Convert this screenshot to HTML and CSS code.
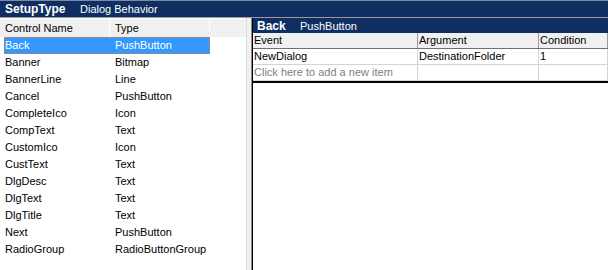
FILE: index.html
```html
<!DOCTYPE html>
<html lang="en">
<head>
  <meta charset="UTF-8">
  <link rel="stylesheet" href="styles.css">
  <title>Dialog Behavior</title>
</head>
<body>
  <div class="titlebar">
    <span class="titulo">SetupType</span>
    <span class="subtitulo">Dialog Behavior</span>
  </div>

  <div class="area">
    <div class="controles">
      <div class="cabecalho">
        <div class="col-nome">Control Name</div>
        <div class="col-tipo">Type</div>
      </div>
      <div class="linha selecionada"><div class="col-nome">Back</div><div class="col-tipo">PushButton</div></div>
      <div class="linha"><div class="col-nome">Banner</div><div class="col-tipo">Bitmap</div></div>
      <div class="linha"><div class="col-nome">BannerLine</div><div class="col-tipo">Line</div></div>
      <div class="linha"><div class="col-nome">Cancel</div><div class="col-tipo">PushButton</div></div>
      <div class="linha"><div class="col-nome">CompleteIco</div><div class="col-tipo">Icon</div></div>
      <div class="linha"><div class="col-nome">CompText</div><div class="col-tipo">Text</div></div>
      <div class="linha"><div class="col-nome">CustomIco</div><div class="col-tipo">Icon</div></div>
      <div class="linha"><div class="col-nome">CustText</div><div class="col-tipo">Text</div></div>
      <div class="linha"><div class="col-nome">DlgDesc</div><div class="col-tipo">Text</div></div>
      <div class="linha"><div class="col-nome">DlgText</div><div class="col-tipo">Text</div></div>
      <div class="linha"><div class="col-nome">DlgTitle</div><div class="col-tipo">Text</div></div>
      <div class="linha"><div class="col-nome">Next</div><div class="col-tipo">PushButton</div></div>
      <div class="linha"><div class="col-nome">RadioGroup</div><div class="col-tipo">RadioButtonGroup</div></div>
    </div>

    <div class="divisor"></div>

    <div class="eventos">
      <div class="eventos-titulo">
        <span class="titulo">Back</span>
        <span class="subtitulo">PushButton</span>
      </div>
      <div class="grade">
        <div class="grade-linha grade-cabecalho">
          <div class="c-evento">Event</div>
          <div class="c-arg">Argument</div>
          <div class="c-cond">Condition</div>
        </div>
        <div class="grade-linha">
          <div class="c-evento">NewDialog</div>
          <div class="c-arg">DestinationFolder</div>
          <div class="c-cond">1</div>
        </div>
        <div class="grade-linha nova">
          <div class="c-evento">Click here to add a new item</div>
          <div class="c-arg"></div>
          <div class="c-cond"></div>
        </div>
      </div>
    </div>
  </div>
</body>
</html>
```

FILE: styles.css
```css
body {
  font-family: 'Liberation Sans', Arial, sans-serif;
  font-size: 11px;
  margin: 0;
  padding: 0;
  width: 608px;
  height: 270px;
  overflow: hidden;
  background-color: #fff;
  color: #000;
}

.titlebar {
  height: 16px;
  background-color: #0f2f63;
  border-top: 1px solid #7f8ba0;
  color: white;
  display: flex;
  align-items: center;
  padding-left: 5px;
}

.titulo {
  font-weight: bold;
  font-size: 12px;
  width: 75px;
}

.subtitulo {
  font-size: 11px;
}

.area {
  display: flex;
  height: 253px;
  border-top: 1px solid #9a9a9a;
}

.controles {
  width: 246px;
  background-color: #fff;
}

.cabecalho {
  display: flex;
  height: 18px;
  background-color: #f0f0f0;
  border-top: 1px solid #fff;
}

.cabecalho div {
  height: 18px;
  line-height: 18px;
  border-right: 1px solid #fff;
}

.col-nome {
  width: 104px;
  padding-left: 5px;
}

.col-tipo {
  width: 94px;
  padding-left: 5px;
}

.linha {
  display: flex;
  height: 17px;
  line-height: 17px;
  color: #000;
}

.linha .col-tipo {
  padding-left: 6px;
}

.selecionada {
  background-color: #3399ff;
  color: white;
  margin-left: 4px;
  width: 204px;
  height: 15px;
  line-height: 15px;
  border: 1px dotted #e07a1f;
}

.selecionada .col-nome {
  width: 104px;
  padding-left: 0;
}

.divisor {
  width: 4px;
  background-color: #f0f0f0;
  border-left: 1px solid #dcdcdc;
  border-right: 1px solid #8c8c8c;
}

.eventos {
  flex: 1;
  border-left: 1px solid #000;
  background-color: #fff;
}

.eventos-titulo {
  height: 15px;
  background-color: #0f2f63;
  color: white;
  display: flex;
  align-items: center;
  padding-left: 4px;
}

.eventos-titulo .titulo {
  width: 43px;
}

.grade {
  border-bottom: 2px solid #000;
}

.grade-linha {
  display: flex;
  height: 15px;
  line-height: 15px;
  border-bottom: 1px solid #d4d4d4;
}

.grade-linha div {
  padding-left: 1px;
  border-right: 1px solid #d4d4d4;
  white-space: nowrap;
}

.grade-cabecalho {
  background-color: #f0f0f0;
  border-bottom: 1px solid #707070;
}

.grade-cabecalho div {
  border-right: 1px solid #9c9c9c;
}

.c-evento {
  width: 163px;
}

.c-arg {
  width: 119px;
  padding-left: 2px;
}

.c-cond {
  flex: 1;
  border-right: none;
}

.nova {
  color: #808080;
}
```
